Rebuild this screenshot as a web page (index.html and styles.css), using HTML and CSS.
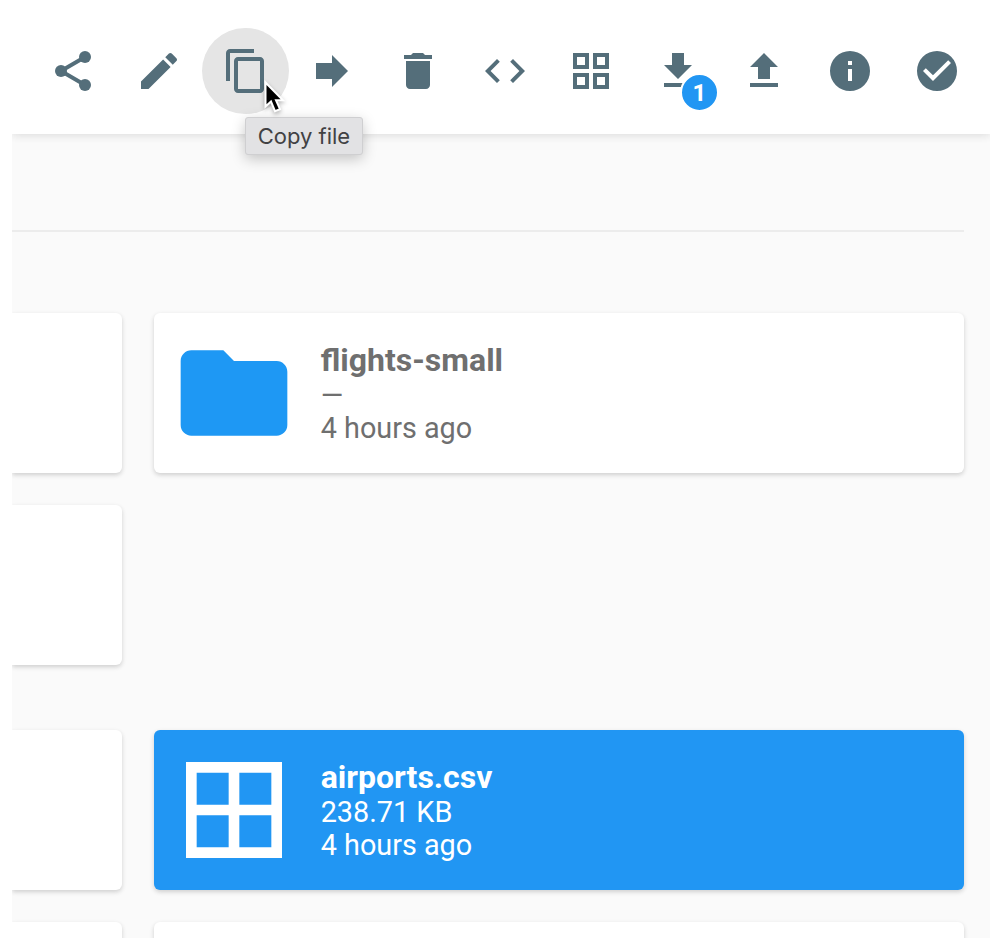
FILE: index.html
```html
<!DOCTYPE html>
<html lang="en">
<head>
<meta charset="utf-8">
<title>Files</title>
<link rel="stylesheet" href="styles.css">
</head>
<body>
<div class="app">
  <header class="toolbar">
    <button class="tool" aria-label="Share"><svg class="icon" viewBox="0 0 24 24"><path d="M6 12L18 5M6 12l12 7" fill="none" stroke="currentColor" stroke-width="2"/><circle cx="6" cy="12" r="3"/><circle cx="18" cy="5" r="3"/><circle cx="18" cy="19" r="3"/></svg></button>
    <button class="tool" aria-label="Rename"><svg class="icon" viewBox="0 0 24 24"><path d="M3 17.25V21h3.75L17.81 9.94l-3.75-3.75L3 17.25zM20.71 7.04c.39-.39.39-1.02 0-1.41l-2.34-2.34c-.39-.39-1.02-.39-1.41 0l-1.83 1.83 3.75 3.75 1.83-1.83z"/></svg></button>
    <button class="tool tool-hover" aria-label="Copy file"><svg class="icon" viewBox="0 0 24 24"><path d="M16 1H4c-1.1 0-2 .9-2 2v14h2V3h12V1zm3 4H8c-1.1 0-2 .9-2 2v14c0 1.1.9 2 2 2h11c1.1 0 2-.9 2-2V7c0-1.1-.9-2-2-2zm0 16H8V7h11v14z"/></svg>
      <span class="tooltip">Copy file</span>
      <svg class="cursor" viewBox="0 0 24 38"><path d="M1.5 2.5v24l5.5-5 4 9.7 5-2.1-4-8.9h7z" fill="#000" stroke="#fff" stroke-width="2"/></svg>
    </button>
    <button class="tool" aria-label="Move file"><svg class="icon" viewBox="0 0 24 24"><path d="M12 8V4l8 8-8 8v-4H4V8z"/></svg></button>
    <button class="tool" aria-label="Delete"><svg class="icon" viewBox="0 0 24 24"><path d="M6 19c0 1.1.9 2 2 2h8c1.1 0 2-.9 2-2V7H6v12zM19 4h-3.5l-1-1h-5l-1 1H5v2h14V4z"/></svg></button>
    <button class="tool" aria-label="Toggle shell"><svg class="icon" viewBox="0 0 24 24"><path d="M9.4 16.6L4.8 12l4.6-4.6L8 6l-6 6 6 6 1.4-1.4zm5.2 0l4.6-4.6-4.6-4.6L16 6l6 6-6 6-1.4-1.4z"/></svg></button>
    <button class="tool" aria-label="Switch view"><svg class="icon" viewBox="0 0 24 24"><path fill-rule="evenodd" d="M3 3h8v8H3zM5 5v4h4V5zM13 3h8v8h-8zM15 5v4h4V5zM3 13h8v8H3zM5 15v4h4v-4zM13 13h8v8h-8zM15 15v4h4v-4z"/></svg></button>
    <button class="tool" aria-label="Download"><svg class="icon" viewBox="0 0 24 24"><path d="M19 9h-4V3H9v6H5l7 7 7-7zM5 18v2h14v-2H5z"/></svg><span class="badge">1</span></button>
    <button class="tool" aria-label="Upload"><svg class="icon" viewBox="0 0 24 24"><path d="M9 16h6v-6h4l-7-7-7 7h4zm-4 2h14v2H5z"/></svg></button>
    <button class="tool" aria-label="Info"><svg class="icon" viewBox="0 0 24 24"><path d="M12 2a10 10 0 1 0 0 20 10 10 0 0 0 0-20zm1 15h-2v-6h2v6zm0-8h-2V7h2v2z"/></svg></button>
    <button class="tool" aria-label="Select multiple"><svg class="icon" viewBox="0 0 24 24"><path d="M12 2a10 10 0 1 0 0 20 10 10 0 0 0 0-20zm-2 15l-5-5 1.41-1.41L10 14.17l7.59-7.59L19 8l-9 9z"/></svg></button>
  </header>
  <main>
    <div class="breadcrumbs"></div>
    <section class="listing folders">
      <div class="card"></div>
      <div class="card item">
        <svg class="thumb folder" viewBox="0 0 24 24"><path d="M10 4H4c-1.1 0-2 .9-2 2v12c0 1.1.9 2 2 2h16c1.1 0 2-.9 2-2V8c0-1.1-.9-2-2-2h-8l-2-2z"/></svg>
        <div class="meta"><p class="name">flights-small</p><p>—</p><p>4 hours ago</p></div>
      </div>
      <div class="card"></div>
    </section>
    <section class="listing files">
      <div class="card"></div>
      <div class="card item selected">
        <svg class="thumb" viewBox="0 0 24 24"><path fill-rule="evenodd" d="M3 3h18v18H3zM5 5v6h6V5zM13 5v6h6V5zM5 13v6h6v-6zM13 13v6h6v-6z"/></svg>
        <div class="meta"><p class="name">airports.csv</p><p>238.71 KB</p><p>4 hours ago</p></div>
      </div>
      <div class="card"></div>
      <div class="card"></div>
    </section>
  </main>
</div>
</body>
</html>
```
FILE: styles.css
```css
* { box-sizing: border-box; }
body {
  margin: 0;
  padding: 12px;
  background: #fff;
  font-family: Roboto, sans-serif;
}
.app {
  display: flex;
  flex-direction: column;
  width: 978px;
  height: 926px;
  overflow: hidden;
  background: #fafafa;
}
.toolbar {
  display: flex;
  flex: none;
  align-items: flex-start;
  position: relative;
  z-index: 1;
  height: 122px;
  padding: 16px 0 0 17.65px;
  background: #fff;
  box-shadow: 0 0 10px rgba(0, 0, 0, .075), 0 1px 10px rgba(0, 0, 0, .075);
}
.tool {
  display: grid;
  flex: none;
  place-items: center;
  position: relative;
  width: 86.4px;
  height: 86px;
  padding: 0;
  border: 0;
  border-radius: 50%;
  background: none;
  color: #546e7a;
  font-family: inherit;
}
.tool-hover { background: #e5e5e5; z-index: 2; }
.icon { width: 48px; height: 48px; fill: currentColor; }
.badge {
  position: absolute;
  left: 45.5px;
  top: 45px;
  width: 39px;
  height: 39px;
  border: 2px solid #fff;
  border-radius: 50%;
  background: #2196f3;
  color: #fff;
  font-size: 24px;
  font-weight: 700;
  line-height: 36px;
}
.tooltip {
  position: absolute;
  left: 42.5px;
  top: 89px;
  width: 118px;
  height: 38px;
  border: 1px solid #cfcfd1;
  border-radius: 3px;
  background: #e2e2e4;
  box-shadow: 0 4px 14px rgba(0, 0, 0, .22);
  color: #414143;
  font-family: Inter, sans-serif;
  font-size: 22px;
  line-height: 37px;
  text-align: center;
  white-space: nowrap;
}
.cursor {
  position: absolute;
  left: 61.35px;
  top: 52px;
  width: 24px;
  height: 38px;
  filter: drop-shadow(0 2px 2px rgba(0, 0, 0, .3));
}
.breadcrumbs {
  height: 98px;
  margin-right: 26px;
  border-bottom: 2px solid #ececec;
}
.listing {
  display: grid;
  grid-template-columns: 110px 810px;
  grid-auto-rows: 160px;
  gap: 32px;
}
.folders { margin-top: 81px; }
.files { margin-top: 65px; }
.card {
  border-radius: 6px;
  background: #fff;
  box-shadow: 0 2px 6px rgba(0, 0, 0, .06), 0 2px 4px rgba(0, 0, 0, .12);
}
.card:not(.item):nth-child(odd) { border-radius: 0 6px 6px 0; }
.item {
  display: flex;
  align-items: center;
  padding: 0 16px;
  color: #6f6f6f;
}
.thumb { flex: none; width: 128px; height: 128px; fill: currentColor; }
.folder { fill: #1e98f4; }
.meta { margin-left: 22.7px; padding-top: 3px; font-size: 28.8px; line-height: 33.6px; }
.meta p { margin: 0; }
.meta .name { margin-bottom: 1px; font-size: 32px; font-weight: 700; line-height: 34.4px; }
.selected { background: #2196f3; color: #fff; }
```
